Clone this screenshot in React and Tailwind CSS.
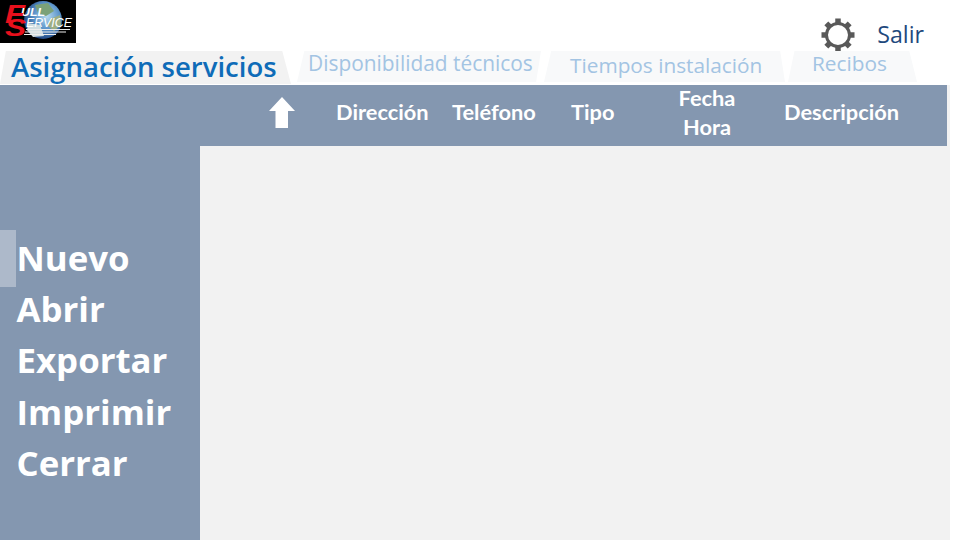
import React from "react";

function Logo() {
  return (
    <svg width="76" height="43" viewBox="0 0 76 43" className="block">
      <defs>
        <radialGradient id="globe" cx="0.6" cy="0.4" r="0.62">
          <stop offset="0" stopColor="#b6d9ee" />
          <stop offset="0.55" stopColor="#5b93c9" />
          <stop offset="1" stopColor="#1d4480" />
        </radialGradient>
      </defs>
      <rect width="76" height="43" fill="#000" />
      <circle cx="43" cy="20" r="19" fill="url(#globe)" />
      <path d="M35 5 L48 3 L54 11 L46 16 L38 13 Z" fill="#7ba178" />
      <path d="M50 19 L60 15 L61 25 L54 31 L48 26 Z" fill="#9cae86" />
      <path d="M28 23 L40 25 L44 36 L33 37 L27 30 Z" fill="#d0dde0" />
      <g stroke="#ececec" strokeWidth="1">
        <line x1="26" y1="29.5" x2="70" y2="29.5" />
        <line x1="25" y1="32" x2="66" y2="32" />
        <line x1="24" y1="34.5" x2="56" y2="34.5" />
      </g>
      <text x="21" y="16" fontFamily="Liberation Sans, sans-serif" fontStyle="italic" fontWeight="700" fontSize="10" fill="#fff" textLength="24" lengthAdjust="spacingAndGlyphs">ULL</text>
      <text x="26" y="27" fontFamily="Liberation Sans, sans-serif" fontStyle="italic" fontSize="12" fill="#fff" textLength="46" lengthAdjust="spacingAndGlyphs">ERVICE</text>
      <text x="5" y="23" fontFamily="Liberation Sans, sans-serif" fontStyle="italic" fontWeight="700" fontSize="25" fill="#e8101c" textLength="20" lengthAdjust="spacingAndGlyphs">F</text>
      <text x="5" y="36" fontFamily="Liberation Sans, sans-serif" fontStyle="italic" fontWeight="700" fontSize="24" fill="#e8101c" textLength="21" lengthAdjust="spacingAndGlyphs">S</text>
    </svg>
  );
}

function Gear() {
  const teeth = [0, 45, 90, 135, 180, 225, 270, 315];
  return (
    <svg width="34" height="34" viewBox="0 0 34 34" className="block">
      <circle cx="17" cy="17" r="11.5" fill="none" stroke="#595959" strokeWidth="3" />
      {teeth.map((a) => (
        <rect key={a} x="14.25" y="0.5" width="5.5" height="5.5" fill="#595959" transform={`rotate(${a} 17 17)`} />
      ))}
    </svg>
  );
}

const menu = ["Nuevo", "Abrir", "Exportar", "Imprimir", "Cerrar"];

export default function App() {
  return (
    <div className="w-[960px] h-[540px] overflow-hidden bg-white flex flex-col font-['Open_Sans',sans-serif]">
      <div className="h-[51px] flex justify-between shrink-0">
        <Logo />
        <div className="flex items-start pt-[18px] pr-[36px]">
          <Gear />
          <span className="ml-[22px] text-[23.2px] leading-[33px] text-[#1f497d]">Salir</span>
        </div>
      </div>

      <div className="h-[34px] flex shrink-0">
        <div className="w-[291px] h-[33px] bg-[#f2f2f2] [clip-path:polygon(2%_0,97%_0,100%_100%,0_100%)] pl-[11px] text-[27.5px] leading-[32px] font-semibold text-[#0f6cb8] whitespace-nowrap">
          Asignación servicios
        </div>
        <div className="ml-[6px] w-[244px] h-[31px] bg-[#f8f9fa] [clip-path:polygon(3%_0,100%_0,98%_100%,0_100%)] pl-[11px] text-[20.9px] leading-[25px] text-[#a3c4e3] whitespace-nowrap">
          Disponibilidad técnicos
        </div>
        <div className="ml-[3px] w-[241px] h-[31px] bg-[#f8f9fa] [clip-path:polygon(3%_0,98%_0,100%_100%,0_100%)] pl-[26px] pt-[1px] text-[20.8px] leading-[26px] text-[#a3c4e3] whitespace-nowrap">
          Tiempos instalación
        </div>
        <div className="ml-[3px] w-[129px] h-[31px] bg-[#f8f9fa] [clip-path:polygon(5%_0,94%_0,100%_100%,0_100%)] pl-[24px] text-[20.8px] leading-[25px] text-[#a3c4e3] whitespace-nowrap">
          Recibos
        </div>
      </div>

      <div className="w-[950px] flex-1 flex flex-col bg-[#f2f2f2]">
        <div className="h-[61px] w-[947px] pb-[8px] bg-[#8497b0] flex items-center text-white font-bold text-[21.8px] leading-[29px] font-['Lato',sans-serif] shrink-0">
          <svg width="28" height="33" viewBox="0 0 28 33" className="ml-[268px] shrink-0 mt-[2px]">
            <path d="M14 1 L27 15 L20 15 L20 32 L7.5 32 L7.5 15 L1 15 Z" fill="#fff" />
          </svg>
          <span className="ml-[40px] w-[92px] whitespace-nowrap">Dirección</span>
          <span className="ml-[24px] w-[86px] whitespace-nowrap">Teléfono</span>
          <span className="ml-[33px] w-[44px] whitespace-nowrap">Tipo</span>
          <span className="ml-[63px] w-[58px] text-center">Fecha<br />Hora</span>
          <span className="ml-[48px] whitespace-nowrap">Descripción</span>
        </div>
        <div className="flex-1 flex min-h-0">
          <div className="w-[200px] bg-[#8497b0] relative pt-[86px] pl-[16.5px] text-white font-bold text-[34.8px] leading-[51.2px]">
            <div className="absolute left-0 top-[84px] w-4 h-[57px] bg-[#adb9ca]" />
            {menu.map((m) => (
              <div key={m} className="relative">{m}</div>
            ))}
          </div>
          <div className="flex-1" />
        </div>
      </div>
    </div>
  );
}
